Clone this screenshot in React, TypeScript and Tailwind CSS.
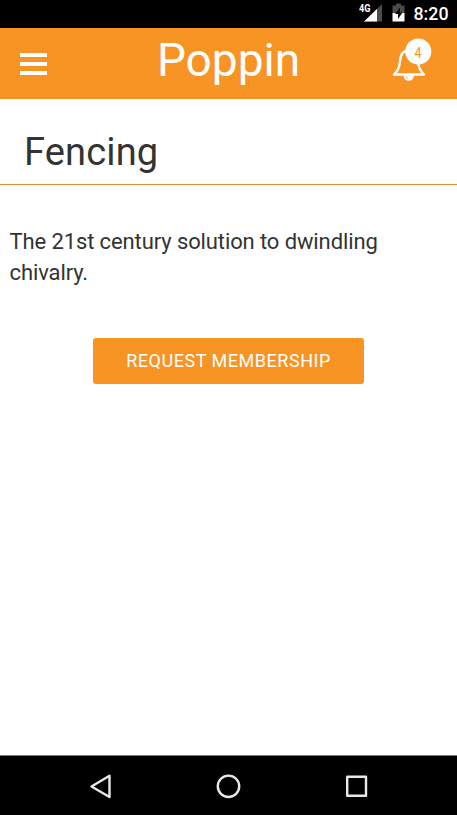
import React from "react";

function StatusBar() {
  return (
    <div className="flex h-7 shrink-0 justify-end bg-black">
      <svg width="60" height="28" viewBox="0 0 60 28" aria-hidden="true">
        <path d="M35 4V21.500H17Z" fill="#4b4b4b" />
        <path d="M30 9V21.500H17Z" fill="#fff" />
        <path d="M49 3.500h5v2h3.500v7.500H45.500V5.500h3.500Z" fill="#4b4b4b" />
        <path d="M45.500 13h12v8.500h-12Z" fill="#fff" />
        <path d="M53 7.500 48 14H51V19L55.500 12.500H53Z" fill="#000" />
        <text x="12" y="12" fontSize="10" fontWeight="700" fill="#fff" textLength="11.500" lengthAdjust="spacingAndGlyphs">4G</text>
      </svg>
      <span className="ml-[7px] w-[43.500px] text-[17.800px] font-medium leading-[27px] text-white">8:20</span>
    </div>
  );
}

function Header() {
  return (
    <header className="grid h-[71px] shrink-0 grid-cols-[1fr_auto_1fr] bg-[#f79424]">
      <button aria-label="Menu" className="flex flex-col gap-[4.500px] self-start pl-5 pt-[24.500px]">
        <span className="h-[4.500px] w-[27px] bg-white" />
        <span className="h-[4.500px] w-[27px] bg-white" />
        <span className="h-[4.500px] w-[27px] bg-white" />
      </button>
      <h1 className="text-[46px] leading-[64px] text-white">Poppin</h1>
      <button aria-label="Notifications" className="justify-self-end self-start pr-[17px] pt-[2px]">
        <svg width="60" height="60" viewBox="380 30 60 60">
          <path d="M394 74.500C398.500 70 399.500 67 400 61C400.500 54 403 50.500 409 50.500C415 50.500 417.500 54 418 61C418.500 67 419.500 70 424 74.500Z" fill="none" stroke="#fff" strokeWidth="2.400" strokeLinejoin="round" />
          <path d="M403.500 75.500H414A5.200 5.200 0 0 1 403.500 75.500Z" fill="#fff" />
          <path d="M406.300 76.500Q406.500 78.500 408.500 79" fill="none" stroke="#f79424" strokeWidth="0.700" />
          <circle cx="418.300" cy="51.500" r="13" fill="#fff" />
          <text x="414.600" y="58" fontSize="14" textLength="7" lengthAdjust="spacingAndGlyphs" fill="#f79424">4</text>
        </svg>
      </button>
    </header>
  );
}

function NavigationBar() {
  return (
    <nav className="h-[60px] shrink-0 border-t border-[#777] bg-black">
      <svg width="457" height="59" viewBox="0 756 457 59" fill="none" stroke="#e9e9e9" strokeWidth="2.400" strokeLinejoin="round">
        <path d="M91.500 786.500 109.500 775.700V797Z" />
        <circle cx="228.500" cy="786.300" r="10.700" />
        <rect x="347.200" y="776.700" width="18.800" height="19" />
      </svg>
    </nav>
  );
}

export default function App() {
  return (
    <div className="flex h-[815px] w-[457px] flex-col overflow-hidden bg-white font-[Roboto,sans-serif] text-[#333]">
      <StatusBar />
      <Header />
      <main className="flex flex-1 flex-col">
        <h2 className="h-[86px] border-b border-[#e0923a] pl-6 pt-[27px] text-[38px] leading-[52px] tracking-[0.150px]">Fencing</h2>
        <p className="mt-[41px] px-[9.500px] text-[22px] leading-[31px] tracking-[-0.110px]">
          The 21st century solution to dwindling<br />chivalry.
        </p>
        <button className="mt-[50px] h-[46px] w-[271px] self-center rounded-[3px] bg-[#f79424] pb-px text-[18px] tracking-[0.530px] text-white">
          REQUEST MEMBERSHIP
        </button>
      </main>
      <NavigationBar />
    </div>
  );
}
